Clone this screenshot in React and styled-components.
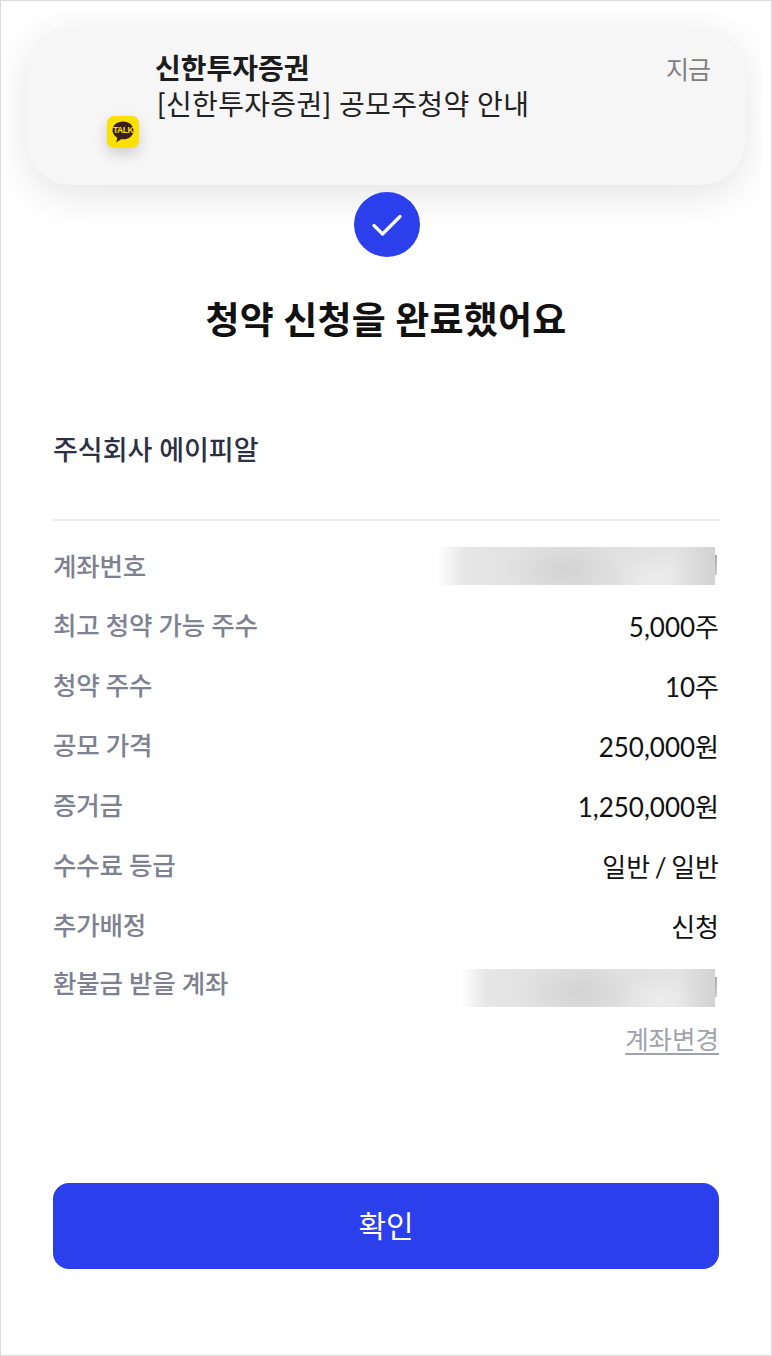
import React from "react";
import styled, { createGlobalStyle } from "styled-components";

const BLUE = "#2b3fec";
const FONT = `Lato, "Noto Sans CJK KR", sans-serif`;

const rows = [
  { label: "최고 청약 가능 주수", value: "5,000주" },
  { label: "청약 주수", value: "10주" },
  { label: "공모 가격", value: "250,000원" },
  { label: "증거금", value: "1,250,000원" },
  { label: "수수료 등급", value: "일반 / 일반" },
  { label: "추가배정", value: "신청" },
];

function App() {
  return (
    <Page>
      <GlobalStyle />
      <NoticeShade>
        <Notice>
          <TalkBadge>
            <svg width="28" height="28" viewBox="0 0 28 28">
              <path
                d="M14 3.500C7.900 3.500 3.500 7.400 3.500 12.300c0 3.200 1.900 5.900 4.800 7.400l-1 4.800 4.700-3.300c.6.1 1.300.1 2 .1 6.100 0 10.500-3.900 10.500-8.900S20.100 3.500 14 3.500z"
                fill="#3c1e1e"
              />
              <text x="14" y="15.400" textAnchor="middle" fontSize="8.500" fontWeight="700" letterSpacing="-0.5" fill="#fae100" fontFamily="Liberation Sans, sans-serif">
                TALK
              </text>
            </svg>
          </TalkBadge>
          <NoticeText>
            <NoticeTitle>신한투자증권</NoticeTitle>
            <NoticeBody>[신한투자증권] 공모주청약 안내</NoticeBody>
          </NoticeText>
          <NoticeTime>지금</NoticeTime>
        </Notice>
      </NoticeShade>

      <CheckCircle>
        <svg width="32" height="32" viewBox="0 0 32 32" fill="none">
          <path d="M3 16.500l8.500 8.500L29 7.500" stroke="#fff" strokeWidth="3.200" strokeLinecap="round" strokeLinejoin="round" />
        </svg>
      </CheckCircle>
      <Heading>청약 신청을 완료했어요</Heading>
      <Company>주식회사 에이피알</Company>
      <Divider />

      <AccountRow>
        <Label>계좌번호</Label>
        <Blurred $width={278} $offset={0} />
      </AccountRow>
      {rows.map((row) => (
        <Row key={row.label}>
          <Label>{row.label}</Label>
          <Value>{row.value}</Value>
        </Row>
      ))}
      <AccountRow $last>
        <Label>환불금 받을 계좌</Label>
        <Blurred $width={254} $offset={5} />
      </AccountRow>
      <ChangeLink>계좌변경</ChangeLink>

      <ConfirmButton type="button">확인</ConfirmButton>
    </Page>
  );
}

const GlobalStyle = createGlobalStyle`
  html, body {
    margin: 0;
    padding: 0;
    background: #fff;
  }
  * {
    box-sizing: border-box;
  }
`;

const Page = styled.main`
  position: relative;
  display: flex;
  flex-direction: column;
  width: 772px;
  height: 1356px;
  padding: 191px 52px 0;
  border: 1px solid #dcdcdc;
  background: #fff;
  font-family: ${FONT};
  overflow: hidden;
`;

const NoticeShade = styled.div`
  position: absolute;
  top: 10px;
  left: 6px;
  width: 754px;
  height: 240px;
  padding: 16px 16px 0 20px;
  overflow: hidden;
`;

const Notice = styled.div`
  position: relative;
  display: flex;
  justify-content: space-between;
  height: 158px;
  padding: 24px 35px 0 128px;
  border-radius: 44px;
  background: #f6f6f6;
  box-shadow: 0 10px 40px rgba(0, 0, 0, 0.11);
`;

const TalkBadge = styled.div`
  position: absolute;
  top: 89px;
  left: 80px;
  display: flex;
  align-items: center;
  justify-content: center;
  width: 32px;
  height: 32px;
  border-radius: 7px;
  background: #fae100;
  box-shadow: 0 6px 14px rgba(0, 0, 0, 0.16);
`;

const NoticeText = styled.div`
  display: flex;
  flex-direction: column;
`;

const NoticeTitle = styled.div`
  font-size: 28px;
  line-height: 34px;
  font-weight: 700;
  color: #1c1c1c;
`;

const NoticeBody = styled.div`
  margin-top: 2px;
  margin-left: 2px;
  font-size: 28px;
  line-height: 34px;
  font-weight: 400;
  letter-spacing: 0.35px;
  color: #222;
`;

const NoticeTime = styled.div`
  margin-top: 1px;
  font-size: 25px;
  line-height: 34px;
  letter-spacing: -1px;
  color: #808080;
`;

const CheckCircle = styled.div`
  position: relative;
  display: flex;
  align-items: center;
  justify-content: center;
  align-self: center;
  width: 66px;
  height: 65px;
  margin-left: 2px;
  border-radius: 50%;
  background: ${BLUE};
`;

const Heading = styled.h1`
  position: relative;
  margin: 37px 0 0;
  font-size: 37px;
  line-height: 52px;
  font-weight: 700;
  letter-spacing: 0.2px;
  text-align: center;
  color: #111;
`;

const Company = styled.div`
  margin-top: 84px;
  font-size: 27px;
  line-height: 40px;
  font-weight: 500;
  color: #2c2f45;
`;

const Divider = styled.div`
  height: 2px;
  margin: 49px 0 26px;
  background: #ededed;
`;

const Row = styled.div`
  display: flex;
  justify-content: space-between;
  align-items: flex-start;
  height: 60px;
`;

const AccountRow = styled(Row)`
  height: ${(p) => (p.$last ? "38px" : "59px")};
  margin-top: ${(p) => (p.$last ? "-2px" : "0")};
`;

const Label = styled.span`
  font-size: 25.500px;
  line-height: 38px;
  font-weight: 500;
  letter-spacing: -0.2px;
  color: #7d8191;
`;

const Value = styled.span`
  margin-top: 2px;
  font-size: 26px;
  line-height: 38px;
  font-weight: 400;
  word-spacing: -2px;
  color: #111;
`;

const Blurred = styled.div`
  position: relative;
  flex: none;
  width: ${(p) => p.$width}px;
  height: 38px;
  margin-top: ${(p) => p.$offset}px;
  margin-right: 4px;
  background:
    radial-gradient(ellipse 60px 30px at 45% 60%, rgba(0, 0, 0, 0.05), transparent),
    radial-gradient(ellipse 40px 24px at 78% 80%, rgba(255, 255, 255, 0.35), transparent),
    linear-gradient(90deg, #fff 0, #e6e6e6 10%, #dedede 50%, #e4e4e4 85%, #d2d2d2 100%);

  &::after {
    content: "";
    position: absolute;
    top: 8px;
    right: -2px;
    width: 2px;
    height: 20px;
    background: linear-gradient(#aaa, #ccc);
  }
`;

const ChangeLink = styled.a`
  align-self: flex-end;
  margin-top: 19px;
  font-size: 25.500px;
  line-height: 36px;
  text-decoration: underline;
  text-underline-offset: 4px;
  color: #a0a3ae;
`;

const ConfirmButton = styled.button`
  width: 100%;
  height: 86px;
  margin-top: 126px;
  padding: 0 0 4px;
  border: none;
  border-radius: 16px;
  background: ${BLUE};
  font-family: ${FONT};
  font-size: 30px;
  color: #fff;
`;

export default App;
